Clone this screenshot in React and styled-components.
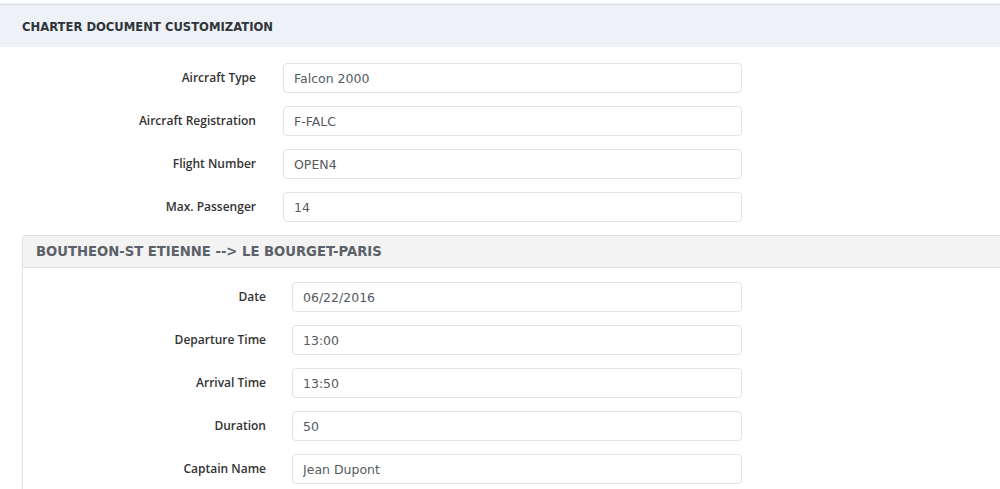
import styled, { createGlobalStyle } from 'styled-components'

const mainFields = [
  { label: 'Aircraft Type', value: 'Falcon 2000' },
  { label: 'Aircraft Registration', value: 'F-FALC' },
  { label: 'Flight Number', value: 'OPEN4' },
  { label: 'Max. Passenger', value: '14' }
]

const legFields = [
  { label: 'Date', value: '06/22/2016' },
  { label: 'Departure Time', value: '13:00' },
  { label: 'Arrival Time', value: '13:50' },
  { label: 'Duration', value: '50' },
  { label: 'Captain Name', value: 'Jean Dupont' }
]

export default function App () {
  return (
    <>
      <GlobalStyle />
      <Page>
        <PortletHead>
          <PortletTitle>Charter Document Customization</PortletTitle>
        </PortletHead>
        <Form $top={16} $bottom={13}>
          {mainFields.map(f => (
            <Row key={f.label} $labelWidth={256} $gap={27} $inputWidth={459}>
              <Label>{f.label}</Label>
              <Input defaultValue={f.value} />
            </Row>
          ))}
        </Form>
        <LegPanel>
          <LegHead>Boutheon-St Etienne --&gt; Le Bourget-Paris</LegHead>
          <Form $top={14} $bottom={14}>
            {legFields.map(f => (
              <Row key={f.label} $labelWidth={243} $gap={26} $inputWidth={450}>
                <Label>{f.label}</Label>
                <Input defaultValue={f.value} />
              </Row>
            ))}
          </Form>
        </LegPanel>
      </Page>
    </>
  )
}

const GlobalStyle = createGlobalStyle`
  html, body {
    margin: 0;
    padding: 0;
    background: #fff;
    overflow: hidden;
  }
  body {
    font-family: "DejaVu Sans", "Open Sans", sans-serif;
    color: #333;
  }
`

const Page = styled.div`
  width: 1000px;
  height: 489px;
  padding-top: 4px;
  box-sizing: border-box;
  overflow: hidden;
`

const PortletHead = styled.div`
  height: 41px;
  border-top: 1px solid #dadde2;
  background: #eef1f5;
  box-shadow: 0 -1px 2px rgba(0, 0, 0, 0.06);
  display: flex;
  align-items: center;
  padding-left: 22px;
  padding-top: 1px;
`

const PortletTitle = styled.h2`
  margin: 0;
  font-size: 11.6px;
  font-weight: 700;
  text-transform: uppercase;
  color: #2f353b;
`

const Form = styled.div`
  display: flex;
  flex-direction: column;
  gap: 13px;
  padding: ${p => p.$top}px 0 ${p => p.$bottom}px;
`

const Row = styled.div`
  display: grid;
  grid-template-columns: ${p => p.$labelWidth}px ${p => p.$inputWidth}px;
  column-gap: ${p => p.$gap}px;
  align-items: center;
`

const Label = styled.label`
  text-align: right;
  font-family: "Open Sans", sans-serif;
  font-size: 12px;
  font-weight: 600;
  color: #333;
  margin-top: -1px;
`

const Input = styled.input`
  height: 30px;
  box-sizing: border-box;
  border: 1px solid #dfe3e8;
  border-radius: 4px;
  padding: 0 10px;
  font-family: inherit;
  font-size: 12.5px;
  font-weight: 400;
  color: #555a61;
  outline: none;
  background: #fff;
`

const LegPanel = styled.div`
  margin-left: 22px;
  border: 1px solid #e0e0e0;
  border-right: 0;
  border-bottom: 0;
  border-top-left-radius: 4px;
`

const LegHead = styled.div`
  height: 31px;
  background: #f3f3f3;
  border-bottom: 1px solid #e0e0e0;
  border-top-left-radius: 4px;
  display: flex;
  align-items: center;
  padding-left: 13px;
  font-size: 13.2px;
  font-weight: 600;
  text-transform: uppercase;
  color: #5b6168;
`
